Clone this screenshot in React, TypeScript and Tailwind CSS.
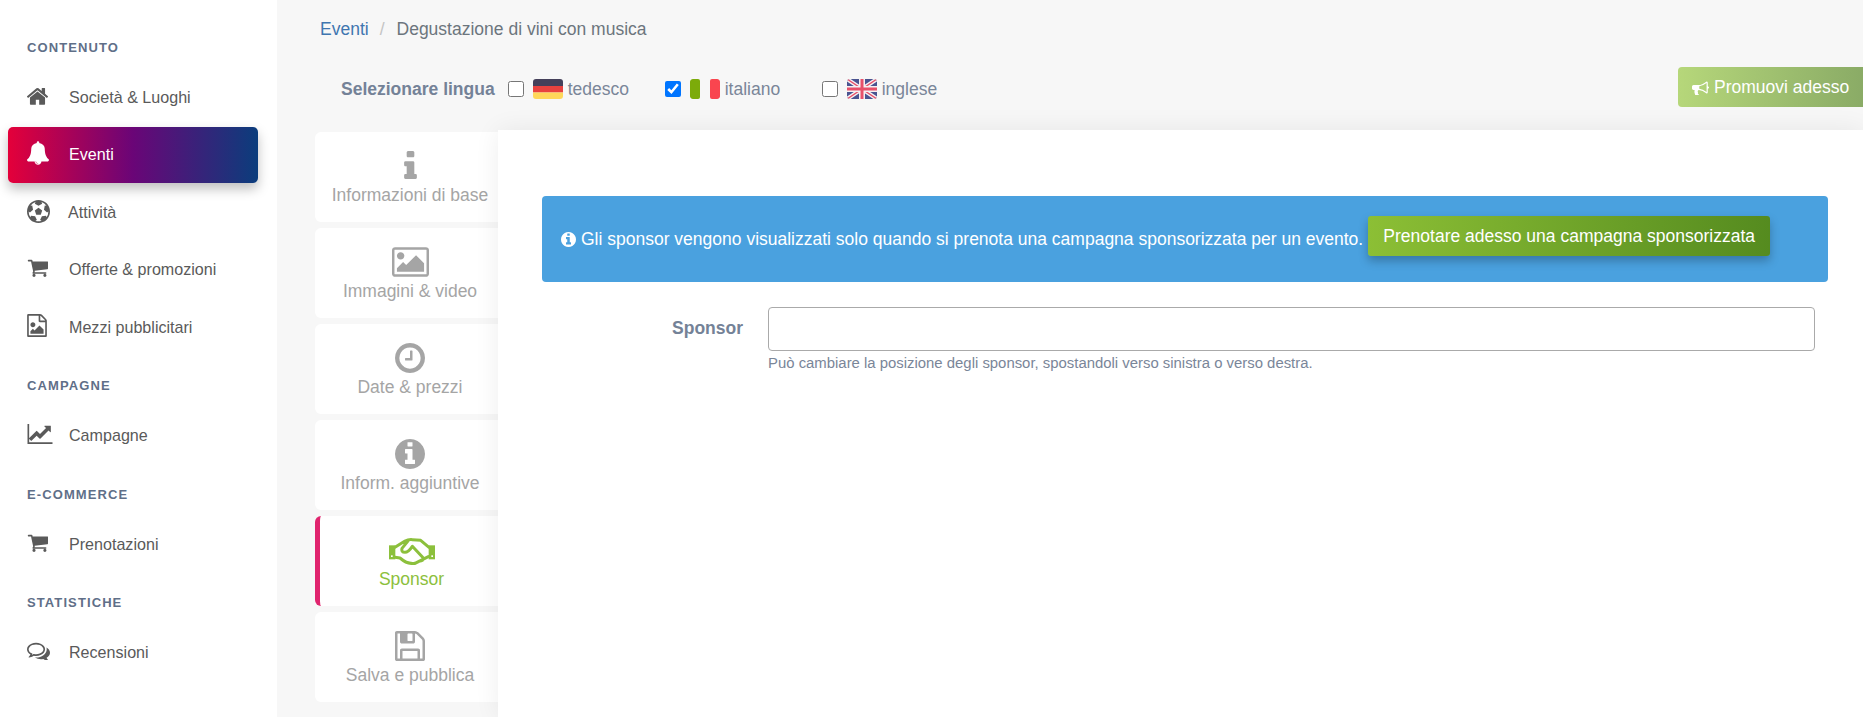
import type { ReactNode } from "react";

// Font Awesome 4 glyphs, viewBox cropped tight to the shape
const glyphs = {
  home: { vb: "96 192 1600 1344", d: "M1472 992v480q0 26-19 45t-45 19h-384v-384h-256v384h-384q-26 0-45-19t-19-45v-480q0-1 .5-3t.5-3l575-474 575 474q1 2 1 6zm223-69l-62 74q-8 9-21 11h-3q-13 0-21-7l-692-577-692 577q-12 8-24 7-13-2-21-11l-62-74q-8-10-7-23.5t11-21.5l719-599q32-26 76-26t76 26l244 204v-195q0-14 9-23t23-9h192q14 0 23 9t9 23v408l219 182q10 8 11 21.5t-7 23.5z" },
  bell: { vb: "64 0 1664 1792", d: "M912 1696q0-16-16-16-59 0-101.5-42.5t-42.5-101.5q0-16-16-16t-16 16q0 73 51.5 124.5t124.5 51.5q16 0 16-16zm816-288q0 52-38 90t-90 38h-448q0 106-75 181t-181 75-181-75-75-181h-448q-52 0-90-38t-38-90q50-42 91-88t85-119.5 74.5-158.5 50-206 19.5-260q0-152 117-282.5t307-158.5q-8-19-8-39 0-40 28-68t68-28 68 28 28 68q0 20-8 39 190 28 307 158.5t117 282.5q0 139 19.5 260t50 206 74.5 158.500 85 119.5 91 88z" },
  futbol: { vb: "0 0 1792 1792", d: "M609 816l287-208 287 208-109 336h-355zm287-816q182 0 348 71t286 191 191 286 71 348-71 348-191 286-286 191-348 71-348-71-286-191-191-286-71-348 71-348 191-286 286-191 348-71zm619 1350q149-203 149-454v-3l-102 89-240-224 63-323 134 12q-150-206-389-282l53 124-287 159-287-159 53-124q-239 76-389 282l135-12 62 323-240 224-102-89v3q0 251 149 454l30-132 326 40 139 298-116 69q117 39 240 39t240-39l-116-69 139-298 326-40z" },
  cart: { vb: "0 192 1728 1472", d: "M704 1536q0 52-38 90t-90 38-90-38-38-90 38-90 90-38 90 38 38 90zm896 0q0 52-38 90t-90 38-90-38-38-90 38-90 90-38 90 38 38 90zm128-1088v512q0 24-16.5 42.5t-40.5 21.5l-1044 122q13 60 13 70 0 16-24 64h920q26 0 45 19t19 45-19 45-45 19h-1024q-26 0-45-19t-19-45q0-11 8-31.5t16-36 21.5-40 15.5-29.5l-177-823h-204q-26 0-45-19t-19-45 19-45 45-19h256q16 0 28.5 6.5t19.5 15.5 13 24.5 8 26 5.5 29.5 4.5 26h1201q26 0 45 19t19 45z" },
  file: { vb: "128 0 1536 1792", d: "M1596 380q28 28 48 76t20 88v1152q0 40-28 68t-68 28h-1344q-40 0-68-28t-28-68v-1600q0-40 28-68t68-28h896q40 0 88 20t76 48zm-444-244v376h376q-10-29-22-41l-313-313q-12-12-41-22zm384 1528v-1024h-416q-40 0-68-28t-28-68v-416h-768v1536h1280zm-128-448v320h-1024v-192l192-192 128 128 384-384zm-832-192q-80 0-136-56t-56-136 56-136 136-56 136 56 56 136-56 136-136 56z" },
  chart: { vb: "0 128 1920 1536", d: "M1920 1536v128h-1920v-1536h128v1408h1792zm-128-1248v435q0 21-19.5 29.5t-35.5-7.5l-121-121-633 633q-10 10-23 10t-23-10l-233-233-416 416-192-192 585-585q10-10 23-10t23 10l233 233 464-464-121-121q-16-16-7.5-35.5t29.5-19.5h435q14 0 23 9t9 23z" },
  comments: { vb: "0 256 1792 1280", d: "M704 384q-153 0-286 52t-211.5 141-78.5 191q0 82 53 158t149 132l97 56-35 84q34-20 62-39l44-31 53 10q78 14 153 14 153 0 286-52t211.5-141 78.5-191-78.5-191-211.5-141-286-52zm0-128q191 0 353.5 68.5t256.5 186.5 94 257-94 257-256.5 186.5-353.5 68.5q-86 0-176-16-124 88-278 128-36 9-86 16h-3q-11 0-20.5-8t-11.5-21q-1-3-1-6.5t.5-6.5 2-6l2.5-5 3.5-5.5 4-5 4.5-5 4-4.5q5-6 23-25t26-29.5 22.5-29 25-38.5 20.5-44q-124-72-195-177t-71-224q0-139 94-257t256.5-186.5 353.5-68.5zm822 1169q10 24 20.5 44t25 38.5 22.5 29 26 29.5 23 25q1 1 4 4.5t4.5 5 4 5 3.5 5.5l2.5 5 2 6 .5 6.5-1 6.5q-3 14-13 22t-22 7q-50-7-86-16-154-40-278-128-90 16-176 16-271 0-472-132 58 4 88 4 161 0 309-45t264-129q125-92 192-212t67-254q0-77-23-152 129 71 204 178t75 230q0 120-71 224.5t-195 176.5z" },
  info: { vb: "576 128 640 1408", d: "M1216 1344v128q0 26-19 45t-45 19h-512q-26 0-45-19t-19-45v-128q0-26 19-45t45-19h64v-384h-64q-26 0-45-19t-19-45v-128q0-26 19-45t45-19h384q26 0 45 19t19 45v576h64q26 0 45 19t19 45zm-128-1152v192q0 26-19 45t-45 19h-256q-26 0-45-19t-19-45v-192q0-26 19-45t45-19h256q26 0 45 19t19 45z" },
  infoCircle: { vb: "128 128 1536 1536", d: "M1152 1376v-160q0-14-9-23t-23-9h-96v-512q0-14-9-23t-23-9h-320q-14 0-23 9t-9 23v160q0 14 9 23t23 9h96v320h-96q-14 0-23 9t-9 23v160q0 14 9 23t23 9h448q14 0 23-9t9-23zm-128-896v-160q0-14-9-23t-23-9h-192q-14 0-23 9t-9 23v160q0 14 9 23t23 9h192q14 0 23-9t9-23zm640 416q0 209-103 385.5t-279.5 279.5-385.5 103-385.5-103-279.5-279.5-103-385.5 103-385.5 279.5-279.5 385.5-103 385.5 103 279.5 279.5 103 385.5z" },
  picture: { vb: "-64 128 1920 1536", d: "M576 576q0 80-56 136t-136 56-136-56-56-136 56-136 136-56 136 56 56 136zm1024 384v448h-1408v-192l320-320 160 160 512-512zm96-704h-1600q-13 0-22.5 9.5t-9.5 22.5v1216q0 13 9.5 22.5t22.5 9.5h1600q13 0 22.5-9.5t9.5-22.5v-1216q0-13-9.5-22.5t-22.5-9.5zm160 32v1216q0 66-47 113t-113 47h-1600q-66 0-113-47t-47-113v-1216q0-66 47-113t113-47h1600q66 0 113 47t47 113z" },
  clock: { vb: "128 128 1536 1536", d: "M1024 544v448q0 14-9 23t-23 9h-320q-14 0-23-9t-9-23v-64q0-14 9-23t23-9h224v-352q0-14 9-23t23-9h64q14 0 23 9t9 23zm416 352q0-148-73-273t-198-198-273-73-273 73-198 198-73 273 73 273 198 198 273 73 273-73 198-198 73-273zm224 0q0 209-103 385.5t-279.5 279.5-385.5 103-385.5-103-279.5-279.5-103-385.5 103-385.5 279.5-279.5 385.5-103 385.5 103 279.5 279.5 103 385.5z" },
  save: { vb: "128 128 1536 1536", d: "M512 1536h768v-384h-768v384zm896 0h128v-896q0-14-10-38.5t-20-34.5l-281-281q-10-10-34-20t-39-10v416q0 40-28 68t-68 28h-576q-40 0-68-28t-28-68v-416h-128v1280h128v-416q0-40 28-68t68-28h832q40 0 68 28t28 68v416zm-384-928v-320q0-13-9.500-22.500t-22.500-9.500h-192q-13 0-22.500 9.500t-9.500 22.500v320q0 13 9.500 22.500t22.500 9.500h192q13 0 22.500-9.500t9.500-22.500zm640 32v928q0 40-28 68t-68 28h-1344q-40 0-68-28t-28-68v-1344q0-40 28-68t68-28h928q40 0 88 20t76 48l280 280q28 28 48 76t20 88z" },
  bullhorn: { vb: "0 128 1792 1536", d: "M1664 768q53 0 90.5 37.5t37.5 90.5-37.5 90.5-90.5 37.5v384q0 52-38 90t-90 38q-417-347-812-380-58 19-91 66t-31 100.5 40 92.5q-20 33-23 65.5t6 58 33.5 55 48 50 61.5 50.5q-29 58-111.5 83t-168.5 11.5-132-55.5q-7-23-29.5-87.5t-32-94.5-23-89-15-101 3.5-98.5 22-110.5h-122q-66 0-113-47t-47-113v-192q0-66 47-113t113-47h480q435 0 896-384 52 0 90 38t38 90v384zm-128 604v-954q-394 302-768 343v270q377 42 768 341z" },
};

function Glyph({ name, className }: { name: keyof typeof glyphs; className: string }) {
  const g = glyphs[name];
  return (
    <svg viewBox={g.vb} fill="currentColor" className={`shrink-0 ${className}`}>
      <path d={g.d} />
    </svg>
  );
}

function Handshake() {
  return (
    <svg viewBox="0 0 138 81" className="w-[46px] h-[27px] mt-[3px] shrink-0 text-[#8cc03c]">
      <rect x="0" y="22" width="19" height="42" fill="currentColor" />
      <rect x="119" y="22" width="19" height="42" fill="currentColor" />
      <rect x="6" y="52" width="5" height="5" fill="#fff" />
      <rect x="127" y="52" width="5" height="5" fill="#fff" />
      <path
        d="M18 28 48 9Q58 4 70 5L95 7 120 28M18 58 33 60Q56 80 78 76L118 56M58 8 39 31Q36 43 48 43 58 43 70 25L103 60Q103 69 90 70L78 76"
        fill="none"
        stroke="currentColor"
        strokeWidth="9"
        strokeLinejoin="round"
        strokeLinecap="round"
      />
    </svg>
  );
}

const menu = [
  {
    title: "CONTENUTO",
    items: [
      { label: "Società & Luoghi", icon: <Glyph name="home" className="w-[21px] h-[18px] mb-[3px]" /> },
      { label: "Eventi", icon: <Glyph name="bell" className="w-[22px] h-[24px] mb-1" />, active: true },
      { label: "Attività", icon: <Glyph name="futbol" className="w-[23px] h-[23px] mb-[2px]" />, shift: true },
      { label: "Offerte & promozioni", icon: <Glyph name="cart" className="w-[21px] h-[18px] mb-[3px]" /> },
      { label: "Mezzi pubblicitari", icon: <Glyph name="file" className="w-[20px] h-[23px] mb-1" /> },
    ],
  },
  {
    title: "CAMPAGNE",
    items: [{ label: "Campagne", icon: <Glyph name="chart" className="w-[26px] h-[20px] mb-[4px]" /> }],
  },
  {
    title: "E-COMMERCE",
    items: [{ label: "Prenotazioni", icon: <Glyph name="cart" className="w-[21px] h-[18px] mb-[3px]" /> }],
  },
  {
    title: "STATISTICHE",
    items: [{ label: "Recensioni", icon: <Glyph name="comments" className="w-[23px] h-[18px] mb-[3px]" /> }],
  },
];

const tabs = [
  { label: "Informazioni di base", icon: <Glyph name="info" className="w-[13px] h-[28px] -mt-[2px]" /> },
  { label: "Immagini & video", icon: <Glyph name="picture" className="w-[37px] h-[30px]" /> },
  { label: "Date & prezzi", icon: <Glyph name="clock" className="w-[30px] h-[30px]" /> },
  { label: "Inform. aggiuntive", icon: <Glyph name="infoCircle" className="w-[30px] h-[30px]" /> },
  { label: "Sponsor", icon: <Handshake />, active: true },
  { label: "Salva e pubblica", icon: <Glyph name="save" className="w-[30px] h-[30px]" /> },
];

function Flag({ children }: { children: ReactNode }) {
  return (
    <svg viewBox="0 0 30 20" className="w-[30px] h-[20px] rounded-[3px] shrink-0">
      {children}
    </svg>
  );
}

const languages = [
  {
    label: "tedesco",
    flag: (
      <Flag>
        <rect width="30" height="7" fill="#45405a" />
        <rect y="7" width="30" height="6.5" fill="#e8423f" />
        <rect y="13.5" width="30" height="6.5" fill="#ffd75a" />
      </Flag>
    ),
  },
  {
    label: "italiano",
    checked: true,
    flag: (
      <Flag>
        <rect width="10" height="20" rx="2" fill="#7cab0a" />
        <rect x="20" width="10" height="20" rx="2" fill="#f9454f" />
      </Flag>
    ),
  },
  {
    label: "inglese",
    flag: (
      <Flag>
        <rect width="30" height="20" fill="#4a5390" />
        <path d="M0 0 30 20M30 0 0 20" stroke="#f5f0f2" strokeWidth="4" />
        <path d="M0 0 30 20M30 0 0 20" stroke="#e8506a" strokeWidth="1.4" />
        <path d="M15 0v20M0 10h30" stroke="#f5f0f2" strokeWidth="6" />
        <path d="M15 0v20M0 10h30" stroke="#e8506a" strokeWidth="3" />
      </Flag>
    ),
  },
];

export default function App() {
  return (
    <div className="flex h-screen overflow-hidden bg-[#f7f7f7] font-['Liberation_Sans',Arial,sans-serif]">
      {/* Sidebar */}
      <aside className="w-[277px] shrink-0 bg-white pt-[37.5px] px-2">
        {menu.map((section, i) => (
          <div key={section.title} className={i > 0 ? "mt-[21px]" : ""}>
            <h3 className="h-5 leading-5 mb-[11.5px] pl-[19px] text-[13px] font-bold tracking-[1.1px] text-[#5f6f88]">
              {section.title}
            </h3>
            <div className="flex flex-col gap-[1.5px]">
              {section.items.map((item) => (
                <div
                  key={item.label}
                  className={`flex items-center h-14 w-[250px] pl-[19px] rounded-[5px] text-[16.1px] ${
                    item.active
                      ? "bg-[linear-gradient(to_right,#e4003a,#6a0577_50%,#0b3d7c)] text-white shadow-[0_6px_12px_rgba(0,0,0,0.25)]"
                      : "text-[#5a5a5a]"
                  }`}
                >
                  <span className={`${item.shift ? "w-[41px]" : "w-[42px]"} shrink-0 flex`}>{item.icon}</span>
                  {item.label}
                </div>
              ))}
            </div>
          </div>
        ))}
      </aside>

      <main className="flex-1 min-w-0 flex flex-col">
        {/* Breadcrumb */}
        <div className="pt-[17px] pl-[43px] text-[17.5px] leading-6 text-[#6c757d]">
          <span className="text-[#3f76b0]">Eventi</span>
          <span className="ml-[11px] mr-[12px] text-[#c4c4c4]">/</span>
          <span>Degustazione di vini con musica</span>
        </div>

        {/* Language row */}
        <div className="mt-[26px] mb-[23px] h-10 flex items-center pl-[64px]">
          <div className="flex items-center pt-1">
            <span className="text-[17.5px] font-bold text-[#748297] mr-[13px] whitespace-nowrap">Selezionare lingua</span>
            {languages.map((lang) => (
              <label key={lang.label} className="w-[157px] flex items-center text-[17.5px] text-[#7a8699]">
                <input type="checkbox" defaultChecked={lang.checked} className="w-4 h-4 m-0 mr-[9px]" />
                {lang.flag}
                <span className="ml-[5px]">{lang.label}</span>
              </label>
            ))}
          </div>
          <button className="ml-auto h-10 w-[185px] shrink-0 flex items-center gap-[5px] pl-[14px] rounded-l-[4px] text-[17.5px] text-white whitespace-nowrap bg-[linear-gradient(to_right,#b6d77a,#8aab66)]">
            <Glyph name="bullhorn" className="w-[17px] h-[15px]" />
            Promuovi adesso
          </button>
        </div>

        <div className="flex-1 flex min-h-0">
          {/* Tabs */}
          <div className="w-[183px] shrink-0 ml-[38px] pt-[2px] flex flex-col gap-[6px]">
            {tabs.map((tab) => (
              <div
                key={tab.label}
                className={`h-[90px] shrink-0 flex flex-col items-center pt-[17.5px] rounded-l-[6px] bg-white text-[17.5px] leading-6 ${
                  tab.active ? "border-l-[5px] border-[#e0246e] pl-[5px] text-[#8cc03c]" : "pl-[7px] text-[#a5a5a5]"
                }`}
              >
                <span className="h-8 flex items-center justify-center">{tab.icon}</span>
                <span className="mt-[1.5px] whitespace-nowrap">{tab.label}</span>
              </div>
            ))}
          </div>

          {/* Panel */}
          <div className="flex-1 min-w-0 bg-white pt-[66px] pl-[44px] pr-[35px] shadow-[0_0_24px_rgba(0,0,0,0.07)]">
            <div className="h-[86px] flex items-center pl-[19px] rounded-[4px] bg-[#4aa1df] text-[17.5px] text-white">
              <Glyph name="infoCircle" className="w-[15px] h-[15px] mr-[5px]" />
              <span className="whitespace-nowrap">
                Gli sponsor vengono visualizzati solo quando si prenota una campagna sponsorizzata per un evento.
              </span>
              <button className="ml-[5px] -translate-y-[3px] h-10 w-[402px] shrink-0 rounded-[3px] text-[17.5px] text-white whitespace-nowrap bg-[linear-gradient(to_right,#8cbf35,#558b1f)] shadow-[0_5px_10px_rgba(0,0,0,0.25)]">
                Prenotare adesso una campagna sponsorizzata
              </button>
            </div>

            <div className="mt-[25px] flex pr-[13px]">
              <label className="w-[201px] shrink-0 h-11 leading-[43px] text-right text-[17.5px] font-bold text-[#748297]">
                Sponsor
              </label>
              <div className="flex-1 ml-[25px]">
                <input
                  type="text"
                  className="block w-full h-11 rounded-[4px] border border-[#aaaaaa] bg-white outline-none"
                />
                <p className="mt-[3px] text-[14.9px] leading-[18px] text-[#7a8699]">
                  Può cambiare la posizione degli sponsor, spostandoli verso sinistra o verso destra.
                </p>
              </div>
            </div>
          </div>
        </div>
      </main>
    </div>
  );
}
